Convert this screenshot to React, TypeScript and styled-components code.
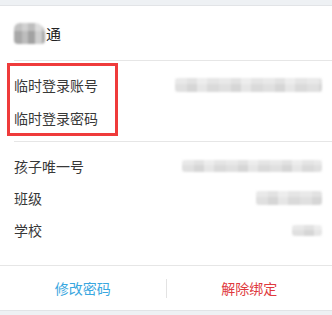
import React from "react";
import styled, { createGlobalStyle } from "styled-components";

const Global = createGlobalStyle`
  html, body {
    margin: 0;
    padding: 0;
    background: #eef1f4;
    font-family: "Noto Sans CJK SC", "Noto Sans", sans-serif;
  }
  * { box-sizing: border-box; }
`;

const Page = styled.div`
  width: 332px;
  height: 315px;
  padding-top: 5px;
  background: #eef1f4;
  overflow: hidden;
`;

const Card = styled.div`
  background: #ffffff;
  border-top: 1px solid #e2e4e7;
  border-bottom: 1px solid #e2e4e7;
`;

const Header = styled.div`
  height: 54px;
  padding-left: 14px;
  display: flex;
  align-items: center;
  font-size: 15px;
  color: #222;
`;

const Divider = styled.div<{ $inset?: boolean }>`
  height: 1px;
  background: #e6e6e6;
  margin-left: ${(p) => (p.$inset ? "14px" : "0")};
`;

const Section = styled.div<{ $pt: number; $pb: number }>`
  position: relative;
  padding: ${(p) => p.$pt}px 0 ${(p) => p.$pb}px;
`;

const Row = styled.div<{ $h: number }>`
  height: ${(p) => p.$h}px;
  display: flex;
  align-items: center;
  justify-content: space-between;
  padding: 0 10px 0 14px;
`;

const Label = styled.span`
  font-size: 14px;
  color: #383838;
  line-height: 1;
`;

const Masked = styled.span<{ $w: number; $h: number; $dark?: boolean }>`
  display: inline-block;
  width: ${(p) => p.$w}px;
  height: ${(p) => p.$h}px;
  border-radius: 3px;
  filter: blur(0.9px);
  background: ${(p) =>
    p.$dark
      ? "linear-gradient(180deg, rgba(255,255,255,0.3) 0 40%, rgba(255,255,255,0) 40%), repeating-linear-gradient(90deg, #a8a8a8 0 8px, #bdbdbd 8px 14px, #a2a2a2 14px 21px, #cfcfcf 21px 28px)"
      : "linear-gradient(180deg, rgba(255,255,255,0.3) 0 45%, rgba(255,255,255,0) 45%), repeating-linear-gradient(90deg, #e0e0e0 0 12px, #d6d6d6 12px 22px, #e6e6e6 22px 32px, #dadada 32px 44px)"};
`;

const TitleMask = styled(Masked)`
  margin-right: 1px;
  border-radius: 6px 10px 4px 4px;
`;

const Highlight = styled.div`
  position: absolute;
  left: 7px;
  top: 2px;
  width: 111px;
  height: 73px;
  border: 3px solid #ef3b3b;
  pointer-events: none;
`;

const Footer = styled.div`
  height: 44px;
  display: flex;
  align-items: center;
`;

const Action = styled.button<{ $color: string }>`
  flex: 1;
  height: 100%;
  border: none;
  background: transparent;
  font-family: inherit;
  font-size: 14px;
  color: ${(p) => p.$color};
  padding: 0;
  cursor: pointer;
`;

const VLine = styled.div`
  width: 1px;
  height: 19px;
  background: #e3e3e3;
`;

export default function App() {
  return (
    <>
      <Global />
      <Page>
        <Card>
          <Header>
            <TitleMask $w={31} $h={21} $dark />
            通
          </Header>
          <Divider $inset />
          <Section $pt={7} $pb={7}>
            <Row $h={33}>
              <Label>临时登录账号</Label>
              <Masked $w={147} $h={14} />
            </Row>
            <Row $h={33}>
              <Label>临时登录密码</Label>
            </Row>
            <Highlight />
          </Section>
          <Divider $inset />
          <Section $pt={8} $pb={19}>
            <Row $h={32}>
              <Label>孩子唯一号</Label>
              <Masked $w={140} $h={12} />
            </Row>
            <Row $h={32}>
              <Label>班级</Label>
              <Masked $w={66} $h={14} />
            </Row>
            <Row $h={32}>
              <Label>学校</Label>
              <Masked $w={30} $h={11} />
            </Row>
          </Section>
          <Divider />
          <Footer>
            <Action $color="#3aa7e0">修改密码</Action>
            <VLine />
            <Action $color="#e03a3e">解除绑定</Action>
          </Footer>
        </Card>
      </Page>
    </>
  );
}
